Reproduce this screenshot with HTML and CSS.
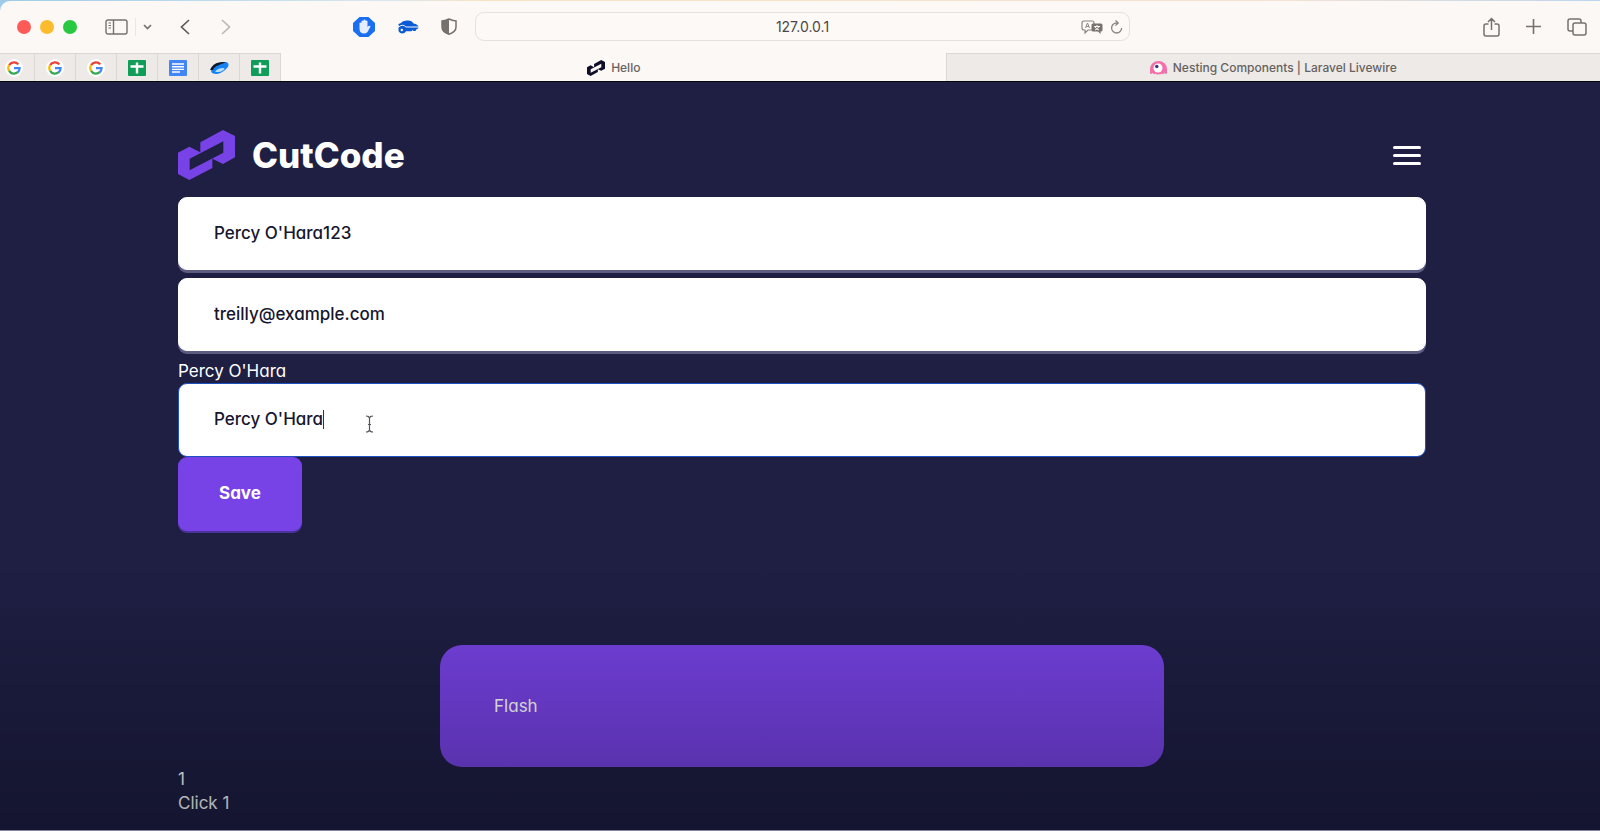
FILE: index.html
```html
<!DOCTYPE html>
<html lang="en">
<head>
  <meta charset="UTF-8" />
  <meta name="viewport" content="width=device-width, initial-scale=1.0"/>
  <title>Hello</title>
  <link rel="stylesheet" href="styles.css">
</head>
<body>

<!-- shared shapes -->
<svg class="sprite" aria-hidden="true">
  <symbol id="mark" viewBox="0 0 171 150">
    <path fill-rule="evenodd" d="M0 68 34 50 67 67V37L135 0l36 18v64l-36 20-32-16v28L34 150 0 132ZM35 86v35L136 68V34Z"/>
  </symbol>
  <symbol id="google" viewBox="0 0 24 24">
    <circle cx="12" cy="12" r="12" fill="#fff"/>
    <path d="M5.5 8.2A7.5 7.5 0 0 1 17.8 7.2" fill="none" stroke="#ea4335" stroke-width="3"/>
    <path d="M5.6 8A7.5 7.5 0 0 0 5.6 16" fill="none" stroke="#fbbc05" stroke-width="3"/>
    <path d="M5.5 15.8A7.5 7.5 0 0 0 17 17.6" fill="none" stroke="#34a853" stroke-width="3"/>
    <path d="M12 12h7.5a7.5 7.5 0 0 1-2.7 5.8" fill="none" stroke="#4285f4" stroke-width="3"/>
  </symbol>
  <symbol id="sheet" viewBox="0 0 18 16">
    <rect width="18" height="16" rx="1" fill="#0f9d58"/>
    <path d="M9 2.5v11M2.5 6.5h13" stroke="#fff" stroke-width="2.4"/>
  </symbol>
</svg>

<div class="toolbar">
  <div class="toolbar-left">
    <div class="dots"><span class="dot red"></span><span class="dot yellow"></span><span class="dot green"></span></div>
    <div class="sidebar-tools">
      <button class="icon-btn" aria-label="Sidebar">
        <svg width="23" height="16" viewBox="0 0 23 16" fill="none" stroke="#76716d" stroke-width="1.4"><rect x="1" y="1" width="21" height="14" rx="2"/><path d="M8.5 1v14"/><path d="M3.5 4h2.500M3.5 6.500h2.500M3.5 9h2.500" stroke-width="1"/></svg>
      </button>
      <span class="divider"></span>
      <button class="icon-btn" aria-label="Tab groups">
        <svg width="9" height="6" viewBox="0 0 9 6" fill="none" stroke="#76716d" stroke-width="1.7"><path d="m1 1 3.5 3.5L8 1"/></svg>
      </button>
    </div>
    <div class="history">
      <button class="icon-btn" aria-label="Back">
        <svg width="10" height="16" viewBox="0 0 10 16" fill="none" stroke="#5f5b58" stroke-width="1.7"><path d="M9 1 1.5 8 9 15"/></svg>
      </button>
      <button class="icon-btn" aria-label="Forward">
        <svg width="10" height="16" viewBox="0 0 10 16" fill="none" stroke="#bdb8b5" stroke-width="1.7"><path d="m1 1 7.5 7L1 15"/></svg>
      </button>
    </div>
    <div class="extensions">
      <button class="icon-btn" aria-label="Ad blocker">
        <svg width="22" height="20" viewBox="0 0 22 20"><path d="M6.5 0h9L22 6v8l-6.5 6h-9L0 14V6Z" fill="#1a6ff0"/><path d="M6.5 9V6q1-1 2 0V4q1-1 2 0V3q1-1 2 0v1q1-1 2 0v6l1-1q1.5-.5 2 .5l-3 5.500q-1.2 1.6-3.5 1.6-4.5 0-4.5-5Z" fill="#e6eefb"/></svg>
      </button>
      <button class="icon-btn" aria-label="Passwords">
        <svg width="22" height="14" viewBox="0 0 22 14"><path d="M2 5.500Q0 4 3.500 3.200 6 0 11 .5q4 0 5.500 3Q21 4 21.500 7q.3 2-2 2.200l-1 1.800h-2l-1-1-1 1.200H9Q8 13.500 5 13.500 1 13 1.500 8.500Z" fill="#0b5bd7"/><path d="M1.500 7Q6 3.500 9 7h13" fill="none" stroke="#fcf8f5"/><circle cx="4.800" cy="10" r="1.200" fill="#fcf8f5"/></svg>
      </button>
      <button class="icon-btn" aria-label="Privacy report">
        <svg width="16" height="17" viewBox="0 0 16 17"><path d="M8 1Q5 2.500 1 3v6q0 5 7 7.200Q15 14 15 9V3Q11 2.500 8 1Z" fill="none" stroke="#76716d" stroke-width="1.5"/><path d="M8 1Q5 2.500 1 3v6q0 5 7 7.200Z" fill="#76716d"/></svg>
      </button>
    </div>
  </div>

  <div class="address">
    <input class="address-input" type="text" value="127.0.0.1" aria-label="Address">
    <div class="address-tools">
      <button class="icon-btn" aria-label="Translate">
        <svg width="22" height="14" viewBox="0 0 22 14"><path d="M3 1h8q2 0 2 2v6q0 1-2 1H7l-3 3v-3H3Q1 10 1 8V3q0-2 2-2Z" fill="none" stroke="#8b8683" stroke-width="1.2"/><path d="m4.5 8 2-5 2 5M5.3 6.500h2.500" fill="none" stroke="#8b8683"/><path d="M12 3.500h8q1.500 0 1.500 1.500v5q0 1.500-1.500 1.500h-.5V14L17 11.500h-5q-1.500 0-1.500-1.500V5q0-1.500 1.500-1.500Z" fill="#77726e"/><path d="M16 5v1M13 6.500h6M14 10q3-1 4-3.500M14 7q1 2 4 3" fill="none" stroke="#fcf8f5"/></svg>
      </button>
      <button class="icon-btn" aria-label="Reload">
        <svg width="13" height="14" viewBox="0 0 13 14" fill="none" stroke="#8b8683" stroke-width="1.3"><path d="M7.5 3h-1A5 5 0 1 0 11.600 8M5.500.6 8.200 3 5.500 5.600"/></svg>
      </button>
    </div>
  </div>

  <div class="toolbar-right">
    <button class="icon-btn" aria-label="Share">
      <svg width="17" height="20" viewBox="0 0 17 20" fill="none" stroke="#76716d" stroke-width="1.5"><path d="M5.5 7H3Q1 7 1 9v8q0 2 2 2h11q2 0 2-2V9q0-2-2-2h-2.500M8.500 13V1.500M5 5l3.500-3.500L12 5"/></svg>
    </button>
    <button class="icon-btn" aria-label="New tab">
      <svg width="15" height="15" viewBox="0 0 15 15" stroke="#76716d" stroke-width="1.6"><path d="M7.5 0v15M0 7.500h15"/></svg>
    </button>
    <button class="icon-btn" aria-label="Tab overview">
      <svg width="20" height="18" viewBox="0 0 20 18" fill="none" stroke="#76716d" stroke-width="1.5"><rect x="6" y="5" width="13" height="12" rx="2"/><path d="M6 13H3q-2 0-2-2V3q0-2 2-2h9q2 0 2 2v2"/></svg>
    </button>
  </div>
</div>

<nav class="tabs">
  <a class="pin" href="#" aria-label="Google"><svg width="18" height="18"><use href="#google"/></svg></a>
  <a class="pin" href="#" aria-label="Google"><svg width="18" height="18"><use href="#google"/></svg></a>
  <a class="pin" href="#" aria-label="Google"><svg width="18" height="18"><use href="#google"/></svg></a>
  <a class="pin" href="#" aria-label="Sheets"><svg width="18" height="16"><use href="#sheet"/></svg></a>
  <a class="pin" href="#" aria-label="Docs">
    <svg width="18" height="16" viewBox="0 0 18 16"><rect width="18" height="16" rx="1" fill="#4285f4"/><path d="M3 4h12M3 6.700h12M3 9.400h12M3 12h8" stroke="#fff" stroke-width="1.4"/></svg>
  </a>
  <a class="pin" href="#" aria-label="Site">
    <svg width="19" height="12" viewBox="0 0 19 12"><path d="M1 9Q3 2 9 1q7-2 9 0 2 3-3 7-7 6-13 3Z" fill="#1683f5"/><path d="M0 8Q3 1 9 .5 13-.5 16 .5 12 1.500 8 3.500 4 5 3 8Z" fill="#101828"/><path d="M5 9.500q3-3.500 8-3.500 3 0 0 2.500Q9 11 5 9.500Z" fill="#b9defb"/></svg>
  </a>
  <a class="pin" href="#" aria-label="Sheets"><svg width="18" height="16"><use href="#sheet"/></svg></a>
  <a class="tab active" href="#"><svg width="18" height="16" fill="#100e28"><use href="#mark"/></svg>Hello</a>
  <a class="tab" href="#">
    <svg width="17" height="14" viewBox="0 0 17 14"><path d="M0 12V8a8.500 8 0 0 1 17 0v4q-1 2-2.500 0-1.500 2-3 .5-1.500 1.500-3 .5-1.500 1.500-3-.5-1.500 1.500-3-.5Q1 14 0 12Z" fill="#f470ab"/><circle cx="8" cy="7" r="4.5" fill="#fff"/><circle cx="6.800" cy="5.500" r="1.7" fill="#33347e"/></svg>Nesting Components | Laravel Livewire
  </a>
</nav>

<main class="page">
  <header class="header">
    <a class="logo" href="#">
      <svg width="57" height="50" fill="#7843e6"><use href="#mark"/></svg>
      <span class="logo-text">CutCode</span>
    </a>
    <button class="burger" aria-label="Menu"><span></span><span></span><span></span></button>
  </header>

  <form class="form">
    <input class="field" type="text" value="Percy O'Hara123" aria-label="Name">
    <input class="field" type="email" value="treilly@example.com" aria-label="Email">
    <label class="field-label" for="name">Percy O'Hara</label>
    <div class="field-wrap">
      <input class="field focused" id="name" type="text" value="Percy O'Hara">
      <span class="caret"></span>
      <svg class="pointer" width="9" height="18" viewBox="0 0 9 18" fill="none" stroke="#55555c" stroke-width="1.2"><path d="M1 1q3 0 3.500 2Q5 1 8 1M4.500 3v12M1 17q3 0 3.500-2 .5 2 3.500 2M3 9.500h3"/></svg>
    </div>
    <button class="save" type="button">Save</button>
  </form>

  <div class="flash">Flash</div>

  <div class="counter">1</div>
  <div class="counter">Click 1</div>
</main>

</body>
</html>
```

FILE: styles.css
```css
* {
  box-sizing: border-box;
}

body {
  margin: 0;
  min-height: 100vh;
  display: flex;
  flex-direction: column;
  padding-top: 1px;
  font-family: Inter, sans-serif;
  background: linear-gradient(90deg, #9fcbe8, #d8e8ef 24%, #f7e3c4 30%, #f3e3d4 80%, #bcd6ee) #1e1f43;
}

a {
  color: inherit;
  text-decoration: none;
}

svg {
  display: block;
  flex: none;
}

.sprite {
  position: absolute;
  width: 0;
  height: 0;
}

.icon-btn {
  padding: 0;
  border: 0;
  background: none;
}

/* browser bar */
.toolbar {
  display: grid;
  grid-template-columns: 95fr 131fr 94fr;
  align-items: center;
  height: 52px;
  padding-bottom: 1px;
  background: #fcf8f5;
  border-radius: 10px 0 0 0;
}

.toolbar-left {
  display: flex;
  align-items: center;
  padding: 0 18px 0 17px;
}

.dots {
  display: flex;
  gap: 9px;
}

.dot {
  width: 14px;
  height: 14px;
  border-radius: 50%;
}

.dot.red { background: #fc5b57; }
.dot.yellow { background: #fdbb2e; }
.dot.green { background: #28c840; }

.sidebar-tools {
  display: flex;
  align-items: center;
  gap: 7px;
  margin-left: 28px;
}

.divider {
  width: 1px;
  height: 18px;
  background: #ebe6e3;
}

.history {
  display: flex;
  gap: 31px;
  margin-left: 28px;
}

.extensions {
  display: flex;
  align-items: center;
  gap: 22px;
  margin-left: auto;
}

.address {
  position: relative;
}

.address-input {
  display: block;
  width: 100%;
  height: 29px;
  border: 1px solid #e6e1de;
  border-radius: 9px;
  background: #fdf9f6;
  color: #4b4846;
  font: 14px Inter, sans-serif;
  text-align: center;
}

.address-tools {
  position: absolute;
  top: 0;
  right: 7px;
  height: 100%;
  display: flex;
  align-items: center;
  gap: 7px;
}

.toolbar-right {
  display: flex;
  align-items: center;
  justify-content: flex-end;
  gap: 26px;
  padding-right: 13px;
}

.tabs {
  display: flex;
  height: 29px;
  background: #fcf8f5;
  border-bottom: 1px solid #05050c;
  color: #66625f;
  font-size: 12px;
  font-weight: 500;
}

.pin {
  display: flex;
  align-items: center;
  justify-content: center;
  width: 41px;
  background: #eeeae7;
  border-top: 1px solid #dcd7d4;
  border-right: 1px solid #dcd7d4;
}

.pin:first-child {
  width: 35px;
  padding-right: 6px;
}

.tab {
  flex: 65;
  display: flex;
  align-items: center;
  justify-content: center;
  gap: 6px;
  background: #eeeae7;
  border-top: 1px solid #dcd7d4;
  border-left: 1px solid #dcd7d4;
}

.tab.active {
  flex: 66;
  background: none;
  border-color: transparent;
}

/* page */
.page {
  position: relative;
  flex: 1;
  padding: 48px 174px 12px 178px;
  background: #1e1f43;
  border-bottom: 1px solid #85869a;
  color: #fff;
  font-size: 17px;
  line-height: 24px;
  font-feature-settings: "cv11";
}

/* shade at the bottom of the screen */
.page::after {
  content: "";
  position: absolute;
  left: 0;
  right: 0;
  bottom: 0;
  height: 270px;
  background: linear-gradient(transparent, rgba(0, 0, 8, 0.33));
  pointer-events: none;
}

.header {
  display: flex;
  align-items: center;
  justify-content: space-between;
  padding: 0 5px 17px 0;
}

.logo {
  display: flex;
  align-items: center;
  gap: 17px;
}

.logo-text {
  font-size: 35px;
  font-weight: 800;
}

.burger {
  display: flex;
  flex-direction: column;
  gap: 5px;
  padding: 0;
  border: 0;
  background: none;
}

.burger span {
  width: 28px;
  height: 3px;
  border-radius: 2px;
  background: #fff;
}

.form {
  display: flex;
  flex-direction: column;
  align-items: flex-start;
}

.field {
  display: block;
  width: 100%;
  height: 73px;
  margin-bottom: 8px;
  padding: 0 35px 2px;
  border: 1px solid #fff;
  border-radius: 9px;
  background: #fff;
  box-shadow: 0 3px 0 #5b5c80;
  color: #16162e;
  font: 500 17px Inter, sans-serif;
  font-feature-settings: inherit;
}

.field.focused {
  height: 74px;
  margin: 0;
  border-color: #1d50c0;
  box-shadow: none;
  outline: none;
}

.field-wrap {
  position: relative;
  width: 100%;
}

.caret {
  position: absolute;
  left: 145px;
  top: 27px;
  width: 1px;
  height: 19px;
  background: #33333f;
}

.pointer {
  position: absolute;
  left: 187px;
  top: 32px;
}

.save {
  height: 74px;
  padding: 0 41px 2px;
  border: 0;
  border-radius: 9px;
  background: #7843e6;
  box-shadow: 0 2px 0 #49349a;
  color: #fff;
  font: 700 17px Inter, sans-serif;
  font-feature-settings: inherit;
}

.flash {
  width: 58%;
  margin: 114px auto 0;
  padding: 49px 54px;
  border-radius: 22px;
  background: #7843e6;
}
```
